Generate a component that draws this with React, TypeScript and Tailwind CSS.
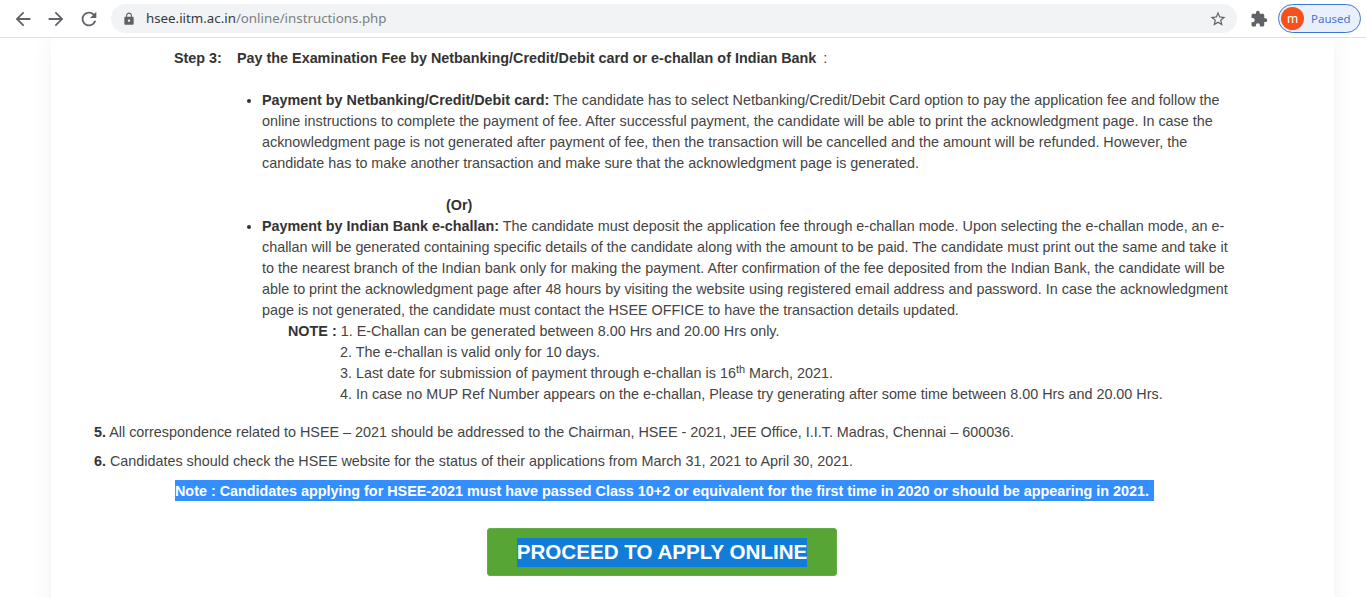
import type { ReactNode } from "react";
import { MdArrowBack, MdArrowForward, MdExtension, MdLock, MdRefresh, MdStarBorder } from "react-icons/md";

function BrowserBar() {
  return (
    <header className="relative z-10 flex h-[38px] items-center border-b border-[#dfe0e6] bg-white pl-[12px] text-[#5f6368]">
      <MdArrowBack className="h-[22px] w-[22px]" />
      <MdArrowForward className="ml-[11px] h-[22px] w-[22px]" />
      <MdRefresh className="ml-[11px] h-[22px] w-[22px]" />
      <div className="ml-[11px] flex h-[29px] w-[1126px] items-center rounded-full bg-[#f1f3f4] pl-[11px] pr-[10px]">
        <MdLock className="h-[14px] w-[14px]" />
        <span className="ml-[10px] flex-1 font-['Noto_Sans',sans-serif] text-[13.3px] text-[#7b7f83]">
          <span className="text-[#35383c]">hsee.iitm.ac.in</span>/online/instructions.php
        </span>
        <MdStarBorder className="h-[18px] w-[18px]" />
      </div>
      <MdExtension className="ml-[13px] h-[18px] w-[18px]" />
      <div className="ml-[10px] flex h-[29px] w-[83px] items-center rounded-full border border-[#3c78d8] bg-[#e9f0fc] pl-[2px]">
        <span className="flex h-[23px] w-[23px] items-center justify-center rounded-full bg-[#f4511e] font-['Noto_Sans',sans-serif] text-[12px] leading-none text-white">
          m
        </span>
        <span className="ml-[7px] font-['Noto_Sans',sans-serif] text-[11.5px] text-[#4a74cf]">Paused</span>
      </div>
    </header>
  );
}

type LineProps = {
  children: ReactNode;
  className?: string;
};

function Line({ children, className = "" }: LineProps) {
  return <p className={`h-[21px] whitespace-nowrap ${className}`}>{children}</p>;
}

function Bold({ children }: { children: ReactNode }) {
  return <strong className="font-bold text-[#333]">{children}</strong>;
}

function Bullet({ children }: { children: ReactNode }) {
  return (
    <li className="flex">
      <span className="mt-[9px] mr-[11px] h-[4px] w-[4px] shrink-0 rounded-full bg-[#333]" />
      <div>{children}</div>
    </li>
  );
}

export default function App() {
  return (
    <div className="h-[597px] w-[1366px] overflow-hidden bg-white font-['Liberation_Sans',Arial,sans-serif] text-[14.37px] leading-[21px] text-[#444]">
      <BrowserBar />
      <main className="mr-[32px] ml-[51px] h-[600px] bg-white pt-[10px] shadow-[0_0_20px_rgba(0,0,0,0.06)]">
        <div className="flex h-[21px] pl-[123px] whitespace-nowrap">
          <span className="w-[63px]"><Bold>Step 3:</Bold></span>
          <span><Bold>Pay the Examination Fee by Netbanking/Credit/Debit card or e-challan of Indian Bank</Bold></span>
          <span className="ml-[7px]">:</span>
        </div>

        <ul className="mt-[21px] pl-[196px]">
          <Bullet>
            <Line><Bold>Payment by Netbanking/Credit/Debit card:</Bold> The candidate has to select Netbanking/Credit/Debit Card option to pay the application fee and follow the</Line>
            <Line>online instructions to complete the payment of fee. After successful payment, the candidate will be able to print the acknowledgment page. In case the</Line>
            <Line>acknowledgment page is not generated after payment of fee, then the transaction will be cancelled and the amount will be refunded. However, the</Line>
            <Line>candidate has to make another transaction and make sure that the acknowledgment page is generated.</Line>
            <Line className="mt-[21px] pl-[184px]"><Bold>(Or)</Bold></Line>
          </Bullet>
          <Bullet>
            <Line><Bold>Payment by Indian Bank e-challan:</Bold> The candidate must deposit the application fee through e-challan mode. Upon selecting the e-challan mode, an e-</Line>
            <Line>challan will be generated containing specific details of the candidate along with the amount to be paid. The candidate must print out the same and take it</Line>
            <Line>to the nearest branch of the Indian bank only for making the payment. After confirmation of the fee deposited from the Indian Bank, the candidate will be</Line>
            <Line>able to print the acknowledgment page after 48 hours by visiting the website using registered email address and password. In case the acknowledgment</Line>
            <Line>page is not generated, the candidate must contact the HSEE OFFICE to have the transaction details updated.</Line>
            <Line className="pl-[26px]"><Bold>NOTE :</Bold> 1. E-Challan can be generated between 8.00 Hrs and 20.00 Hrs only.</Line>
            <Line className="pl-[78px]">2. The e-challan is valid only for 10 days.</Line>
            <Line className="pl-[78px]">3. Last date for submission of payment through e-challan is 16<sup className="text-[11px]">th</sup> March, 2021.</Line>
            <Line className="pl-[78px]">4. In case no MUP Ref Number appears on the e-challan, Please try generating after some time between 8.00 Hrs and 20.00 Hrs.</Line>
          </Bullet>
        </ul>

        <div className="mt-[17px] flex flex-col gap-2 pl-[43px]">
          <Line><Bold>5.</Bold> All correspondence related to HSEE – 2021 should be addressed to the Chairman, HSEE - 2021, JEE Office, I.I.T. Madras, Chennai – 600036.</Line>
          <Line><Bold>6.</Bold> Candidates should check the HSEE website for the status of their applications from March 31, 2021 to April 30, 2021.</Line>
        </div>

        <p className="mt-[8px] ml-[124px] h-[21px] w-[979px] bg-[#338fff] leading-[22px] font-bold whitespace-nowrap text-white">
          Note : Candidates applying for HSEE-2021 must have passed Class 10+2 or equivalent for the first time in 2020 or should be appearing in 2021.
        </p>

        <button className="mt-[27px] ml-[436px] flex h-[48px] w-[350px] justify-center rounded-[3px] border border-[#65ab47] bg-[#57a635] pt-[9px]">
          <span className="h-[29px] bg-[#127dd8] text-[20.6px] leading-[28px] font-bold whitespace-nowrap text-white">
            PROCEED TO APPLY ONLINE
          </span>
        </button>
      </main>
    </div>
  );
}
